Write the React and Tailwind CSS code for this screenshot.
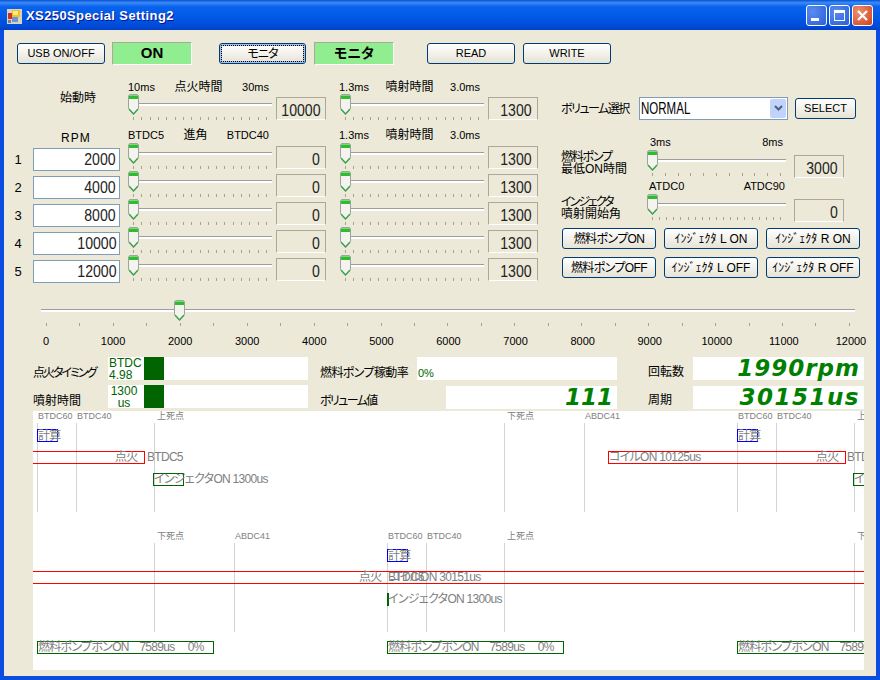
const uiFont = "[font-family:'Liberation_Sans','Noto_Sans_CJK_JP',sans-serif]";

function Thumb({ left = 0 }) {
  return (
    <svg className="absolute top-0" style={{ left }} width="11" height="21" viewBox="0 0 11 21">
      <path d="M1.5 .5h8l1 1v13l-5 5.500-5-5.500v-13z" fill="#f4f3ee" stroke="#9aa5a0" />
      <rect x="1" y="1" width="9" height="1" fill="#7fd67f" />
      <rect x="1" y="2" width="9" height="3" fill="#2ebd2e" />
      <path d="M1 15l4.500 5 4.500-5" fill="none" stroke="#3f9f4f" strokeWidth="1.400" />
    </svg>
  );
}

function Slider({ ticks, thumb = 0, className = "w-[144px]" }) {
  return (
    <div className={`relative h-[28px] shrink-0 pt-[9px] ${className}`}>
      <div className="h-[3px] border-t border-[#9d9d9d] bg-white" />
      <div className="mt-[11px] flex justify-between px-[5px]">
        {Array.from({ length: ticks }).map((_, i) => (
          <span key={i} className="h-[3px] w-px bg-[#a3a294]" />
        ))}
      </div>
      <Thumb left={thumb} />
    </div>
  );
}

function ValueBox({ value, className = "" }) {
  return (
    <div className={`flex h-[23px] w-[50px] shrink-0 items-end justify-end border border-[#aca899] border-b-white bg-[#ece9d8] pr-[5px] text-[16px] leading-[16px] text-[#222] ${className}`}>
      <span className="origin-right scale-x-[0.88]">{value}</span>
    </div>
  );
}

function SliderBox({ value, ticks = 17 }) {
  return (
    <div className="flex w-[198px]">
      <Slider ticks={ticks} />
      <ValueBox value={value} className="ml-[4px] mt-[3px]" />
    </div>
  );
}

function Btn({ children, className = "", focus }) {
  return (
    <button
      className={`flex h-[21px] items-center justify-center whitespace-nowrap rounded-[3px] border border-[#003c74] bg-linear-to-b from-white to-[#e6e3d6] leading-none text-black ${
        focus ? "shadow-[inset_0_0_0_2px_#a6c0ea] outline-1 -outline-offset-[3px] outline-dotted outline-black" : ""
      } ${className}`}
    >
      {children}
    </button>
  );
}

function Header({ a, b, c, className = "" }) {
  return (
    <div className={`flex h-[14px] w-[141px] justify-between leading-[14px] ${className}`}>
      <span className="text-[11px]">{a}</span>
      <span>{b}</span>
      <span className="text-[11px]">{c}</span>
    </div>
  );
}

function Meter({ text }) {
  return (
    <div className="flex h-[23px] w-[200px] bg-white">
      <div className="w-[36px] pl-px text-[12px] leading-[12px] text-[#006400]">{text}</div>
      <div className="w-[20px] bg-[#006400]" />
    </div>
  );
}

function BigValue({ children, className = "" }) {
  return (
    <div className={`flex h-[23px] items-center justify-end bg-white pr-[4px] text-[23px] font-bold italic leading-none text-[#008000] [font-family:'DejaVu_Sans',sans-serif] ${className}`}>
      {children}
    </div>
  );
}

// chart coordinates are screen pixels, the chart starts at 33,411
const at = (x, y, extra) => ({ left: x - 33, top: y - 411, ...extra });

const topLines = [37, 76, 154, 504, 584, 737, 776, 854];
const bottomLines = [154, 234, 387, 426, 504, 854];
const scaleLabels = [
  ["BTDC60", 38, 411], ["BTDC40", 77, 411], ["上死点", 157, 411], ["下死点", 507, 411], ["ABDC41", 585, 411],
  ["BTDC60", 738, 411], ["BTDC40", 777, 411], ["上死点", 857, 411],
  ["下死点", 157, 531], ["ABDC41", 235, 531], ["BTDC60", 388, 531], ["BTDC40", 427, 531], ["上死点", 507, 531], ["下死点", 857, 531],
];
const boxes = [
  [37, 429, 21, "border-[#0000ff]"], [737, 429, 21, "border-[#0000ff]"], [387, 549, 21, "border-[#0000ff]"],
  [20, 451, 125, "border-[#ff0000]"], [608, 451, 238, "border-[#ff0000]"], [20, 571, 900, "border-[#ff0000]"],
  [153, 473, 31, "border-[#006400]"], [853, 473, 31, "border-[#006400]"], [387, 593, 1, "border-[#006400]"],
  [37, 641, 177, "border-[#006400]"], [387, 641, 177, "border-[#006400]"], [737, 641, 177, "border-[#006400]"],
];
const fuelText = "燃料ポンプボンON    7589us     0%";
const traces = [
  ["計算", 38, 429], ["計算", 738, 429], ["計算", 388, 549],
  ["点火", 115, 450], ["BTDC5", 147, 450], ["コイルON 10125us", 609, 450], ["点火", 816, 450], ["BTDC5", 847, 450],
  ["インジェクタON 1300us", 154, 472], ["インジェクタON 1300us", 854, 472],
  ["点火", 359, 570], ["BTDC5", 388, 570], ["コイルON 30151us", 389, 570], ["インジェクタON 1300us", 388, 592],
  [fuelText, 38, 640], [fuelText, 388, 640], [fuelText, 738, 640],
];

function Chart() {
  return (
    <div className="relative ml-[29px] mt-[2px] h-[259px] w-[831px] overflow-hidden bg-white text-[12px] leading-[14px] text-[#808080]">
      {topLines.map((x) => (
        <div key={x} className="absolute h-[89px] w-px bg-[#d3d3d3]" style={at(x, 423)} />
      ))}
      {bottomLines.map((x) => (
        <div key={x} className="absolute h-[89px] w-px bg-[#d3d3d3]" style={at(x, 543)} />
      ))}
      {scaleLabels.map(([t, x, y]) => (
        <span key={t + x + y} className="absolute whitespace-nowrap text-[9px] leading-[10px]" style={at(x, y)}>{t}</span>
      ))}
      {boxes.map(([x, y, w, color]) => (
        <div key={x + "-" + y} className={`absolute h-[13px] border ${color}`} style={at(x, y, { width: w })} />
      ))}
      {traces.map(([t, x, y]) => (
        <span key={t + x + y} className="absolute whitespace-pre tracking-[-0.7px]" style={at(x, y)}>{t}</span>
      ))}
    </div>
  );
}

function WinBtn({ children, className = "" }) {
  return (
    <div className={`flex h-[21px] w-[21px] items-center justify-center rounded-[3px] border border-white ${className}`}>
      {children}
    </div>
  );
}

function TitleBar() {
  return (
    <div className="flex h-[30px] shrink-0 items-center bg-[linear-gradient(to_bottom,#0a4fd6_0%,#3a8cf5_9%,#0a63ee_22%,#0058e6_60%,#0049d6_90%,#003fc4_100%)] pl-[7px] pr-[7px]">
      <svg width="15" height="15" viewBox="0 0 15 15" className="mt-[2px]">
        <rect x="0" y="0" width="15" height="15" fill="#d8d4c4" />
        <rect x="1" y="4" width="4" height="6" fill="#d03020" />
        <rect x="5" y="1" width="8" height="7" fill="#f4c020" />
        <rect x="6" y="2" width="5" height="4" fill="#fde88a" />
        <rect x="5" y="8" width="6" height="5" fill="#6f93d8" />
        <rect x="1" y="11" width="3" height="3" fill="#7a8090" />
      </svg>
      <span className="ml-[4px] mt-[2px] text-[13px] font-bold tracking-[0.4px] text-white [text-shadow:1px_1px_#0f1089]">
        XS250Special Setting2
      </span>
      <div className="ml-auto flex gap-[2px]">
        <WinBtn className="bg-[radial-gradient(circle_at_30%_30%,#5a8cf0,#2a5fd8)]">
          <span className="mr-[4px] mt-[9px] h-[3px] w-[8px] bg-white" />
        </WinBtn>
        <WinBtn className="bg-[radial-gradient(circle_at_30%_30%,#5a8cf0,#2a5fd8)]">
          <span className="h-[11px] w-[11px] border border-t-[3px] border-white" />
        </WinBtn>
        <WinBtn className="bg-[radial-gradient(circle_at_30%_30%,#f09070,#d0401c)]">
          <svg width="13" height="13" viewBox="0 0 13 13">
            <path d="M2 2l9 9M11 2l-9 9" stroke="white" strokeWidth="2.200" />
          </svg>
        </WinBtn>
      </div>
    </div>
  );
}

const rpmRows = [
  ["1", "2000"],
  ["2", "4000"],
  ["3", "8000"],
  ["4", "10000"],
  ["5", "12000"],
];

const scale = ["0", "1000", "2000", "3000", "4000", "5000", "6000", "7000", "8000", "9000", "10000", "11000", "12000"];

export default function App() {
  return (
    <div className={`flex h-[680px] w-[880px] flex-col overflow-hidden bg-[#0a4de0] text-[12px] text-black [font-feature-settings:'palt'] ${uiFont}`}>
      <TitleBar />
      <div className="mx-[4px] mb-[4px] flex-1 overflow-hidden bg-[#ece9d8]">
        {/* top buttons */}
        <div className="mt-[12px] flex h-[23px] items-center pl-[13px]">
          <Btn className="w-[88px] text-[11px]">USB ON/OFF</Btn>
          <div className="ml-[7px] flex h-[23px] w-[80px] items-center justify-center border border-[#aca899] border-b-white border-r-white bg-[#90ee90] text-[15px] font-bold">ON</div>
          <Btn focus className="ml-[27px] w-[87px] tracking-[-1px]">モニタ</Btn>
          <div className="ml-[8px] flex h-[23px] w-[80px] items-center justify-center border border-[#aca899] border-b-white border-r-white bg-[#90ee90] text-[14px] font-bold">モニタ</div>
          <Btn className="ml-[33px] w-[88px] text-[11px]">READ</Btn>
          <Btn className="ml-[8px] w-[88px] text-[11px]">WRITE</Btn>
        </div>

        <div className="mt-[15px] flex">
          {/* slider table */}
          <div className="w-[536px] shrink-0">
            <div className="flex">
              <Header a="10ms" b="点火時間" c="30ms" className="ml-[124px]" />
              <Header a="1.3ms" b="噴射時間" c="3.0ms" className="ml-[70px]" />
            </div>
            <div className="flex h-[28px]">
              <div className="-mt-[3px] w-[124px] pl-[56px] leading-[14px]">始動時</div>
              <SliderBox value="10000" />
              <div className="ml-[14px]"><SliderBox value="1300" /></div>
            </div>
            <div className="mb-px mt-[6px] flex h-[14px]">
              <div className="mt-[3px] h-[11px] w-[124px] pl-[57px] leading-[14px] tracking-[1px]">RPM</div>
              <Header a="BTDC5" b="進角" c="BTDC40" />
              <Header a="1.3ms" b="噴射時間" c="3.0ms" className="ml-[70px]" />
            </div>
            {rpmRows.map(([no, rpm]) => (
              <div key={no} className="flex h-[28px]">
                <div className="mt-[10px] w-[29px] pr-[1px] text-center text-[13px] leading-[14px]">{no}</div>
                <div className="mt-[5px] flex h-[23px] w-[87px] items-center justify-end border border-[#7f9db9] bg-white pr-[3px] text-[16px] text-[#222]">
                  <span className="origin-right scale-x-[0.88]">{rpm}</span>
                </div>
                <div className="w-[8px]" />
                <SliderBox value="0" />
                <div className="ml-[14px]"><SliderBox value="1300" /></div>
              </div>
            ))}
          </div>

          {/* right panel */}
          <div className="ml-[21px] w-[300px]">
            <div className="mt-[17px] flex h-[23px] items-center">
              <span className="w-[78px] whitespace-nowrap tracking-[-1.500px]">ボリューム選択</span>
              <div className="flex h-[23px] w-[149px] items-center justify-between border border-[#7f9db9] bg-white pl-[1px] pr-px text-[16px]">
                <span className="origin-left scale-x-[0.72]">NORMAL</span>
                <span className="flex h-[19px] w-[16px] items-center justify-center rounded-[2px] bg-[#c1d3fb]">
                  <svg width="9" height="7" viewBox="0 0 9 7"><path d="M1 1l3.500 3.500 3.500-3.500" fill="none" stroke="#4d6185" strokeWidth="2" /></svg>
                </span>
              </div>
              <Btn className="ml-[7px] w-[61px] text-[11px]">SELECT</Btn>
            </div>
            <div className="ml-[89px] mt-[15px] flex h-[14px] w-[133px] justify-between text-[11px] leading-[14px]">
              <span>3ms</span>
              <span>8ms</span>
            </div>
            <div className="mt-px flex">
              <div className="mt-px w-[86px] leading-[12px]"><span className="tracking-[-1.200px]">燃料ポンプ</span><br />最低ON時間</div>
              <Slider ticks={11} className="w-[139px]" />
              <ValueBox value="3000" className="ml-[8px] mt-[5px]" />
            </div>
            <div className="ml-[88px] mt-px flex h-[14px] w-[136px] justify-between text-[11px] leading-[14px]">
              <span>ATDC0</span>
              <span>ATDC90</span>
            </div>
            <div className="mt-px flex">
              <div className="mt-[2px] w-[86px] leading-[12px]"><span className="tracking-[-2px]">インジェクタ</span><br />噴射開始角</div>
              <Slider ticks={19} className="w-[139px]" />
              <ValueBox value="0" className="ml-[8px] mt-[5px]" />
            </div>
            <div className="ml-px mt-[6px] grid grid-cols-[94px_94px_94px] gap-x-[8px] gap-y-[8px]">
              <Btn className="tracking-[-0.600px]">燃料ポンプON</Btn>
              <Btn>ｲﾝｼﾞｪｸﾀ L ON</Btn>
              <Btn>ｲﾝｼﾞｪｸﾀ R ON</Btn>
              <Btn className="tracking-[-0.600px]">燃料ポンプOFF</Btn>
              <Btn>ｲﾝｼﾞｪｸﾀ L OFF</Btn>
              <Btn>ｲﾝｼﾞｪｸﾀ R OFF</Btn>
            </div>
          </div>
        </div>

        {/* rpm scale */}
        <div className="ml-[37px] mt-[17px] w-[814px]">
          <Slider ticks={25} thumb={133} className="w-[814px]" />
          <div className="mt-[6px] flex h-[14px] justify-between pl-[5px] pr-[4px] text-[11px] leading-[14px]">
            {scale.map((n) => (
              <span key={n} className="flex w-0 justify-center whitespace-nowrap">{n}</span>
            ))}
          </div>
        </div>

        {/* status */}
        <div className="mt-[9px] flex h-[28px] pl-[29px]">
          <span className="mt-[9px] w-[75px] whitespace-nowrap leading-[14px] tracking-[-2px]">点火タイミング</span>
          <Meter text={<>BTDC<br />4.98</>} />
          <span className="ml-[12px] mt-[9px] w-[97px] whitespace-nowrap leading-[14px] tracking-[-0.600px]">燃料ポンプ稼動率</span>
          <div className="flex h-[23px] w-[200px] items-end bg-white pl-[1px] text-[11px] leading-[14px] text-[#006400]">0%</div>
          <span className="ml-[31px] mt-[8px] w-[45px] leading-[14px]">回転数</span>
          <BigValue className="w-[171px] tracking-[1px]">1990rpm</BigValue>
        </div>
        <div className="flex h-[24px] pl-[29px]">
          <span className="mt-[9px] w-[75px] leading-[14px]">噴射時間</span>
          <Meter text={<span className="block w-[30px] text-center">1300<br />us</span>} />
          <span className="ml-[12px] mt-[9px] w-[126px] whitespace-nowrap leading-[14px] tracking-[-1.600px]">ボリューム値</span>
          <BigValue className="mt-px w-[171px]">111</BigValue>
          <span className="ml-[31px] mt-[8px] w-[45px] leading-[14px]">周期</span>
          <BigValue className="mt-px w-[171px] tracking-[1.500px]">30151us</BigValue>
        </div>

        <Chart />
      </div>
    </div>
  );
}
